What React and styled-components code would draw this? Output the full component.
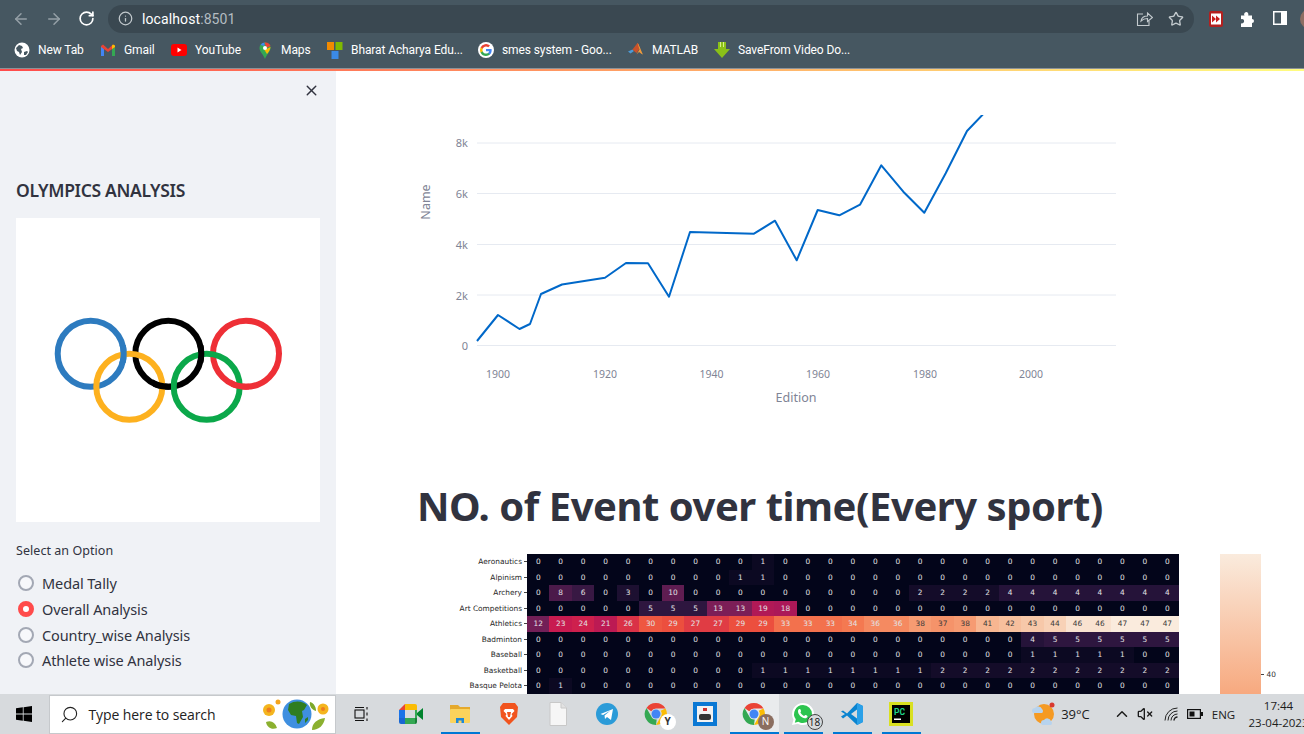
import React from 'react';
import styled, { createGlobalStyle } from 'styled-components';
import { ArrowLeft, ArrowRight, RotateCw, Info, Star, X, Search, VolumeX, ChevronUp } from 'lucide-react';

const GlobalStyle = createGlobalStyle`
  html, body { margin: 0; padding: 0; background: #fff; }
  * { box-sizing: border-box; }
  body { font-family: "Noto Sans", "Liberation Sans", sans-serif; color: #31333f; }
`;

const Page = styled.div`
  width: 1304px;
  height: 734px;
  display: flex;
  flex-direction: column;
  overflow: hidden;
`;

/* browser chrome */
const Toolbar = styled.div`
  height: 36px;
  flex: none;
  background: #465761;
  display: flex;
  align-items: center;
  padding-top: 1px;
`;
const NavButton = styled.div`
  width: 32.5px;
  flex: none;
  display: flex;
  justify-content: center;
  color: ${p => (p.$on ? '#fff' : '#95a0a7')};
`;
const NavGroup = styled.div`
  display: flex;
  padding-left: 5px;
  width: 108px;
  flex: none;
`;
const AddressBar = styled.div`
  width: 1086px;
  height: 28px;
  flex: none;
  border-radius: 14px;
  background: #3a4851;
  display: flex;
  align-items: center;
  padding: 0 2px 0 10px;
  color: #c3cace;
`;
const Url = styled.div`
  margin-left: 9px;
  font-family: Roboto, sans-serif;
  font-size: 14px;
  letter-spacing: 0.1px;
  color: #fff;
  flex: 1;
  span { color: #b4bcc1; }
`;
const AddressIcon = styled.div`
  width: 32px;
  display: flex;
  justify-content: center;
  color: #c3cace;
`;
const ExtGroup = styled.div`
  display: flex;
  margin-left: 6px;
  flex: none;
`;
const ExtButton = styled.div`
  width: 32px;
  display: flex;
  justify-content: center;
`;
const Avatar = styled.div`
  width: 20px;
  height: 20px;
  margin-left: 4px;
  flex: none;
  border-radius: 50%;
  background: #8d6e63;
`;
const Bookmarks = styled.div`
  height: 32px;
  flex: none;
  background: #465761;
  display: flex;
  align-items: center;
  padding: 0 0 4px 14px;
`;
const Bookmark = styled.div`
  width: ${p => p.$w}px;
  flex: none;
  display: flex;
  align-items: center;
  gap: 8px;
  font-family: Roboto, sans-serif;
  font-size: 12px;
  letter-spacing: -0.1px;
  color: #fff;
  white-space: nowrap;
`;
const Decoration = styled.div`
  height: 3px;
  flex: none;
  border-top: 1px solid #8b9298;
  background: linear-gradient(90deg, #ff4b4b, #fffd80);
`;

/* streamlit area */
const Content = styled.div`
  flex: 1;
  min-height: 0;
  display: flex;
  overflow: hidden;
`;
const Sidebar = styled.aside`
  width: 336px;
  flex: none;
  background: #f0f2f6;
  padding: 0 16px;
`;
const CloseRow = styled.div`
  height: 38px;
  display: flex;
  align-items: center;
  justify-content: flex-end;
  color: #31333f;
`;
const SideTitle = styled.h2`
  margin: 69px 0 0;
  font-size: 17.5px;
  line-height: 24px;
  font-weight: 600;
  letter-spacing: -0.35px;
  white-space: nowrap;
`;
const LogoCard = styled.div`
  width: 304px;
  height: 304px;
  margin-top: 16px;
  background: #fff;
`;
const OptionLabel = styled.div`
  margin-top: 19px;
  font-size: 12.5px;
  line-height: 20px;
  letter-spacing: 0.05px;
`;
const RadioList = styled.div`
  margin-top: 9.7px;
  display: flex;
  flex-direction: column;
`;
const RadioRow = styled.div`
  height: 25.6px;
  display: flex;
  align-items: center;
  gap: 8px;
  padding-left: 2px;
  font-size: 14.5px;
  letter-spacing: -0.1px;
  white-space: nowrap;
`;
const RadioDot = styled.span`
  width: 16px;
  height: 16px;
  flex: none;
  border-radius: 50%;
  border: ${p => (p.$on ? '5px solid #ff4b4b' : '2px solid #a3a8b4')};
  background: ${p => (p.$on ? '#fff' : '#f7f8fb')};
`;
const Main = styled.main`
  flex: 1;
  min-width: 0;
  padding: 44px 0 0 81px;
`;
const ChartSvg = styled.svg`
  display: block;
  font-family: "Noto Sans", sans-serif;
`;
const Heading = styled.h1`
  margin: 68px 0 0;
  font-size: 40px;
  line-height: 48px;
  font-weight: 700;
  letter-spacing: -0.47px;
  white-space: nowrap;
`;

/* heatmap */
const HeatRow = styled.div`
  margin-top: 24px;
  display: flex;
  align-items: flex-start;
`;
const YLabels = styled.div`
  width: 110px;
  flex: none;
`;
const YLabel = styled.div`
  height: 15.5px;
  display: flex;
  align-items: center;
  justify-content: flex-end;
  font-family: "DejaVu Sans", sans-serif;
  font-size: 7.4px;
  color: #262626;
  white-space: nowrap;
  &::after {
    content: '';
    width: 3px;
    height: 1px;
    margin-left: 2px;
    background: #444;
  }
`;
const HeatGrid = styled.div`
  display: grid;
  grid-template-columns: repeat(29, 22.48px);
  grid-auto-rows: 15.5px;
  flex: none;
`;
const HeatCell = styled.div`
  display: flex;
  align-items: center;
  justify-content: center;
  font-family: "DejaVu Sans", sans-serif;
  font-size: 7.4px;
  background: ${p => p.$bg};
  color: ${p => (p.$dark ? '#3a3a3a' : '#e2e2e4')};
`;
const ColorBar = styled.div`
  position: relative;
  width: 41px;
  height: 140px;
  margin-left: 41px;
  flex: none;
  background: linear-gradient(180deg, #faebdd, #f7a97f);
`;
const BarTick = styled.div`
  position: absolute;
  left: 41px;
  top: 116px;
  display: flex;
  align-items: center;
  gap: 3px;
  font-family: "DejaVu Sans", sans-serif;
  font-size: 7.4px;
  color: #333;
  &::before {
    content: '';
    width: 3px;
    height: 1px;
    background: #444;
  }
`;

/* windows taskbar */
const Taskbar = styled.div`
  height: 40px;
  flex: none;
  background: #d7dadd;
  display: flex;
  align-items: center;
  overflow: hidden;
`;
const StartButton = styled.div`
  width: 48.5px;
  flex: none;
  display: flex;
  justify-content: center;
`;
const SearchBox = styled.div`
  width: 287px;
  height: 39px;
  margin-top: 1px;
  flex: none;
  background: #fff;
  border: 1px solid #c6c9cc;
  display: flex;
  align-items: center;
  padding-left: 10px;
  color: #222;
  font-family: "Open Sans", sans-serif;
  font-size: 14px;
`;
const SearchText = styled.span`
  margin-left: 10px;
  flex: 1;
  letter-spacing: -0.1px;
  white-space: nowrap;
`;
const Slots = styled.div`
  display: flex;
  margin-left: 2px;
  flex: none;
  height: 40px;
`;
const Slot = styled.div`
  position: relative;
  width: 49px;
  height: 40px;
  flex: none;
  display: flex;
  align-items: center;
  justify-content: center;
  background: ${p => (p.$active ? '#e9ebed' : 'transparent')};
  &::after {
    content: '';
    display: ${p => (p.$open ? 'block' : 'none')};
    position: absolute;
    bottom: 0;
    left: ${p => (p.$active ? 0 : 5)}px;
    right: ${p => (p.$active ? 0 : 5)}px;
    height: 2px;
    background: #0078d4;
  }
`;
const Badge = styled.span`
  position: absolute;
  right: 5px;
  bottom: 4px;
  min-width: 16px;
  height: 16px;
  border-radius: 50%;
  background: ${p => p.$bg};
  border: ${p => (p.$ring ? '1px solid #444' : 'none')};
  color: ${p => p.$fg};
  font-family: "Open Sans", sans-serif;
  font-size: 10px;
  line-height: 15px;
  text-align: center;
`;
const Tray = styled.div`
  display: flex;
  align-items: center;
  margin-left: 104px;
  flex: none;
  color: #1c1c1c;
  font-family: "Open Sans", sans-serif;
`;
const TrayItem = styled.div`
  width: ${p => p.$w}px;
  flex: none;
  display: flex;
  align-items: center;
  justify-content: center;
  margin-left: ${p => p.$gap || 0}px;
  font-size: ${p => p.$size || 12}px;
`;
const Clock = styled.div`
  width: 70px;
  flex: none;
  margin-left: 2px;
  display: flex;
  flex-direction: column;
  align-items: center;
  font-size: 11.5px;
  line-height: 17.5px;
  white-space: nowrap;
`;

/* drawings */
const Ring = ({ cx, cy, color, clip }) => (
  <circle cx={cx} cy={cy} r="33" fill="none" stroke={color} strokeWidth="6" clipPath={clip} />
);

const OlympicRings = () => (
  <svg width="304" height="304" viewBox="16 218 304 304">
    <defs>
      <clipPath id="over-a"><rect x="114" y="345" width="18" height="18" /></clipPath>
      <clipPath id="over-b"><rect x="153" y="377" width="18" height="18" /></clipPath>
      <clipPath id="over-c"><rect x="192" y="345" width="18" height="18" /></clipPath>
      <clipPath id="over-d"><rect x="231" y="377" width="18" height="18" /></clipPath>
    </defs>
    <Ring cx="90.7" cy="353.7" color="#2d7bbf" />
    <Ring cx="168.3" cy="353.7" color="#000" />
    <Ring cx="246" cy="353.7" color="#ee2f36" />
    <Ring cx="129.3" cy="386.7" color="#fdb11f" />
    <Ring cx="206.7" cy="386.7" color="#0ba84a" />
    <Ring cx="90.7" cy="353.7" color="#2d7bbf" clip="url(#over-a)" />
    <Ring cx="168.3" cy="353.7" color="#000" clip="url(#over-b)" />
    <Ring cx="168.3" cy="353.7" color="#000" clip="url(#over-c)" />
    <Ring cx="246" cy="353.7" color="#ee2f36" clip="url(#over-d)" />
  </svg>
);

const linePoints = [
  [477, 341], [498, 315], [519.5, 329], [530, 324], [541, 294], [562, 284.5], [605, 277.7],
  [626, 263], [648, 263.3], [669, 296.7], [690, 232], [754, 233.7], [775, 220.7], [796.7, 260.3],
  [817.7, 210], [839.3, 215.3], [860, 204.7], [881.3, 165.3], [903.3, 191.7], [924.3, 212.7],
  [945.7, 173.3], [967, 131], [990, 107],
];

const AreaChart = () => (
  <ChartSvg width="700" height="299" viewBox="417 115 700 299">
    {[143, 193.5, 244.5, 295, 345.5].map(y => (
      <line key={y} x1="477" x2="1116" y1={y} y2={y} stroke="#e6eaf1" strokeWidth="1" />
    ))}
    {[['8k', 147], ['6k', 198], ['4k', 249], ['2k', 299.5], ['0', 350]].map(([t, y]) => (
      <text key={t} x="468" y={y} textAnchor="end" fontSize="11" fill="#808495">{t}</text>
    ))}
    {[[1900, 498], [1920, 605], [1940, 711.5], [1960, 818], [1980, 925], [2000, 1031]].map(([t, x]) => (
      <text key={t} x={x} y="378" textAnchor="middle" fontSize="10.5" fill="#808495">{t}</text>
    ))}
    <text x="796" y="402" textAnchor="middle" fontSize="12.5" fill="#808495">Edition</text>
    <text transform="translate(430 202) rotate(-90)" textAnchor="middle" fontSize="12.5" fill="#808495">Name</text>
    <polyline
      points={linePoints.map(p => p.join(',')).join(' ')}
      fill="none"
      stroke="#0068c9"
      strokeWidth="2"
      strokeLinejoin="round"
    />
  </ChartSvg>
);

const GlobeIcon = () => (
  <svg width="16" height="16" viewBox="0 0 16 16">
    <circle cx="8" cy="8" r="7.5" fill="#fff" />
    <path d="M2 6l3-3 3 1 1 2-2 1 1 3-2 3-1-3-2-1zM10 10l3-1 1 1-2 3-2 0z" fill="#465761" />
  </svg>
);
const GmailIcon = () => (
  <svg width="16" height="14" viewBox="0 0 16 14">
    <path d="M1 3v10h3V6z" fill="#4285f4" />
    <path d="M15 3v10h-3V6z" fill="#34a853" />
    <path d="M1 3l2-1.5L8 6l5-4.5L15 3v1L8 9 1 4z" fill="#ea4335" />
    <path d="M12 6l3-2V2.500L13 1.500 12 2.500z" fill="#fbbc04" />
  </svg>
);
const YouTubeIcon = () => (
  <svg width="16" height="12" viewBox="0 0 16 12">
    <rect width="16" height="12" rx="3" fill="#f00" />
    <path d="M6.500 3.500v5l4-2.500z" fill="#fff" />
  </svg>
);
const MapsIcon = () => (
  <svg width="16" height="17" viewBox="0 0 13 17">
    <path d="M6.500 17C5 12.500 1 10 1 6a5.500 5.500 0 0 1 11 0c0 4-4 6.500-5.500 11z" fill="#34a853" />
    <path d="M2 3a5.500 5.500 0 0 1 4-2.500V4z" fill="#4285f4" />
    <path d="M6 .5A5.500 5.500 0 0 1 12 4L8 6z" fill="#ea4335" />
    <path d="M12 5c0 2.500-2 5-3.500 7L6 8z" fill="#fbbc04" />
    <circle cx="6.500" cy="6" r="2" fill="#fff" />
  </svg>
);
const SquaresIcon = () => (
  <svg width="16" height="17" viewBox="0 0 16 17">
    <rect x="0" y="0" width="7" height="8" fill="#f28a00" />
    <rect x="8.500" y="0" width="7" height="8" fill="#7fba00" />
    <rect x="4.500" y="9" width="7" height="8" fill="#3b8ae6" />
  </svg>
);
const GoogleIcon = () => (
  <svg width="16" height="16" viewBox="0 0 24 24">
    <circle cx="12" cy="12" r="12" fill="#fff" />
    <path d="M20.500 12.200c0-.6-.1-1.200-.2-1.700H12v3.300h4.800a4 4 0 0 1-1.800 2.700v2.200h2.900c1.600-1.500 2.600-3.800 2.600-6.500z" fill="#4285f4" />
    <path d="M12 21c2.400 0 4.400-.8 5.900-2.200L15 16.500c-.8.500-1.800.9-3 .9-2.300 0-4.300-1.600-5-3.700H4v2.300A9 9 0 0 0 12 21z" fill="#34a853" />
    <path d="M7 13.700a5.400 5.400 0 0 1 0-3.400V8H4a9 9 0 0 0 0 8z" fill="#fbbc04" />
    <path d="M12 6.600c1.300 0 2.500.5 3.400 1.300L18 5.400A9 9 0 0 0 4 8l3 2.300c.7-2.100 2.700-3.700 5-3.700z" fill="#ea4335" />
  </svg>
);
const MatlabIcon = () => (
  <svg width="16" height="16" viewBox="0 0 16 16">
    <path d="M0 9.500l4.500-2L6 9 2.500 11.500z" fill="#4c9ad6" />
    <path d="M4.500 7.500L9.500 1c1 0 2 4 2 6l-3 4L6 9z" fill="#c8512a" />
    <path d="M9.500 1c1.500 1 3.500 8 5.500 11.500-2-.5-3-2-4-2.500l-2.500 2.500 3-5z" fill="#ef9b3c" />
  </svg>
);
const SaveFromIcon = () => (
  <svg width="16" height="16" viewBox="0 0 16 16">
    <path d="M4 0h8v7h4l-8 9-8-9h4z" fill="#8ac018" />
    <path d="M6.500 0v5M9.500 0v5" stroke="#d8f08a" strokeWidth="1" />
  </svg>
);
const ShareIcon = () => (
  <svg width="17" height="16" viewBox="0 0 17 16" fill="none" stroke="#c3cace" strokeWidth="1.100">
    <path d="M7 3H1.500v11.500H13V10" />
    <path d="M5 10c.5-3 3-5 6.500-5V2l5 4.500-5 4V7.500C9 7.500 6.500 8.500 5 10z" />
  </svg>
);
const ExtRedIcon = () => (
  <svg width="14" height="16" viewBox="0 0 14 16">
    <rect width="14" height="16" rx="2" fill="#b3201f" />
    <rect x="2" y="2.500" width="10" height="11" fill="#fff" />
    <path d="M3 4.500l4 3.500-4 3.500zM7 4.500L11 8l-4 3.500z" fill="#c8201f" />
  </svg>
);
const PuzzleIcon = () => (
  <svg width="16" height="16" viewBox="0 0 16 16">
    <path d="M1 4.500h3.500a2 2 0 0 1 3.500-2.500q.7 1 .2 2.500H12v3.500a2 2 0 1 1 0 4V16H1v-3.800a2.200 2.200 0 1 0 0-4z" fill="#fff" />
  </svg>
);
const PanelIcon = () => (
  <svg width="14" height="14" viewBox="0 0 14 14">
    <rect x="0.750" y="0.750" width="12.500" height="12.500" fill="#465761" stroke="#fff" strokeWidth="1.500" />
    <rect x="8" y="0" width="6" height="14" fill="#fff" />
  </svg>
);
const WindowsIcon = () => (
  <svg width="16" height="16" viewBox="0 0 16 16" fill="#000">
    <path d="M0 2.300l6.800-1v6.300H0zM7.600 1.200L16 0v7.600H7.600zM0 8.400h6.800v6.300l-6.800-1zM7.600 8.400H16V16l-8.400-1.200z" />
  </svg>
);
const EarthBadge = () => (
  <svg width="74" height="36" viewBox="0 0 74 36">
    <circle cx="8" cy="13" r="6" fill="#f4b51e" />
    <circle cx="8" cy="13" r="2.500" fill="#ee7d1f" />
    <circle cx="17" cy="5" r="2.500" fill="#f4a51e" />
    <path d="M5 25c5-2 9 0 11 6-5 2-10 0-11-6z" fill="#8bb02f" />
    <circle cx="36" cy="17" r="14.500" fill="#3f8fe0" />
    <path d="M28 7c6-4 14-3 18 1l-3 5-2 1 1 6-4 7-2-1-1-7-5-1-3-5zM44 22l3-2 0 3-3 3z" fill="#2f7d21" />
    <path d="M49 5c4 1 6 5 6 9-4-1-7-5-6-9z" fill="#7da82a" />
    <circle cx="62" cy="12" r="5.500" fill="#f4b51e" />
    <circle cx="62" cy="12" r="2" fill="#ee7d1f" />
    <path d="M51 33c0-7 5-11 13-12-1 7-6 12-13 12z" fill="#8bb02f" />
  </svg>
);
const TaskViewIcon = () => (
  <svg width="16" height="16" viewBox="0 0 16 16" fill="none" stroke="#111" strokeWidth="1.100">
    <rect x="1" y="4" width="9" height="8" />
    <path d="M1 1.500h9M1 14.500h9M13 1v2.500M13 6.500v3M13 12.500v2.500" />
  </svg>
);
const MeetIcon = () => (
  <svg width="24" height="22" viewBox="0 0 24 22">
    <path d="M6 1h10v6H6z" fill="#fbbc04" />
    <path d="M0 7l6-6v6z" fill="#ea4335" />
    <path d="M0 7h6v8H0z" fill="#1a73e8" />
    <path d="M0 15h6v6H2a2 2 0 0 1-2-2z" fill="#1967d2" />
    <path d="M6 15h10v6H6z" fill="#34a853" />
    <path d="M16 1h0a2 2 0 0 1 2 2v4h-2z" fill="#fbbc04" />
    <path d="M16 15h2v4a2 2 0 0 1-2 2z" fill="#188038" />
    <path d="M16 7h2v8h-2z" fill="#34a853" />
    <path d="M18 10l6-5v12l-6-5z" fill="#00832d" />
  </svg>
);
const FolderIcon = () => (
  <svg width="22" height="20" viewBox="0 0 22 20">
    <path d="M1 1h8l2 2h10v4H1z" fill="#e5a92c" />
    <rect x="1" y="5" width="20" height="14" rx="1" fill="#fbd35c" />
    <path d="M7 19v-5h8v5h-2.500v-2.500h-3V19z" fill="#1e88d8" />
  </svg>
);
const BraveIcon = () => (
  <svg width="20" height="24" viewBox="0 0 20 24">
    <path d="M4 1h12l3 4-1 10-8 8-8-8L1 5z" fill="#f1541e" />
    <path d="M6 7h8l1.500 2-3 3 1 2-3.500 4-3.500-4 1-2-3-3z" fill="#fff" />
    <path d="M8 10h4l-1 5h-2z" fill="#f1541e" />
  </svg>
);
const FileIcon = () => (
  <svg width="18" height="24" viewBox="0 0 18 24">
    <path d="M1 .5h11l5.500 5.500v17.500H1z" fill="#f6f6f6" stroke="#c8c8c8" />
    <path d="M12 .5V6h5.500" fill="#e2e2e2" stroke="#c8c8c8" />
  </svg>
);
const TelegramIcon = () => (
  <svg width="22" height="22" viewBox="0 0 22 22">
    <circle cx="11" cy="11" r="11" fill="#2b9bd8" />
    <path d="M4.500 11L17 6l-2 11-4-3-2 2-.5-3.500 6-5-7.500 4.500z" fill="#fff" />
  </svg>
);
const ChromeIcon = ({ size = 24 }) => (
  <svg width={size} height={size} viewBox="0 0 24 24">
    <path d="M12 1a11 11 0 0 1 9.500 5.500H12a5.500 5.500 0 0 0-4.800 2.800L2.500 6A11 11 0 0 1 12 1z" fill="#ea4335" />
    <path d="M21.500 6.500A11 11 0 0 1 12 23l4.800-8.200a5.500 5.500 0 0 0-.1-6z" fill="#fbbc04" />
    <path d="M12 23A11 11 0 0 1 2.500 6l4.700 8.200a5.500 5.500 0 0 0 5.500 3.200z" fill="#34a853" />
    <circle cx="12" cy="12" r="4.500" fill="#4285f4" />
  </svg>
);
const PhotoAppIcon = () => (
  <svg width="24" height="24" viewBox="0 0 24 24">
    <rect width="24" height="24" fill="#0a78d4" />
    <rect x="4" y="4" width="16" height="16" fill="#f2f2f2" />
    <rect x="6" y="12" width="12" height="6" rx="2" fill="#333" />
    <rect x="10" y="6" width="4" height="3" fill="#c33" />
  </svg>
);
const WhatsAppIcon = () => (
  <svg width="24" height="24" viewBox="0 0 24 24">
    <path d="M12 1a11 11 0 0 1 0 22c-2 0-3.700-.5-5.200-1.300L1 23l1.500-5.500A11 11 0 0 1 12 1z" fill="#fff" />
    <path d="M12 3a9 9 0 0 1 0 18c-1.800 0-3.300-.5-4.700-1.300l-3.500 1 1-3.400A9 9 0 0 1 12 3z" fill="#2cc44f" />
    <path d="M8.500 7c1 0 1 .5 1.500 2 .2.800-.5 1-.6 1.500.8 1.600 2 2.700 3.600 3.400.6 0 .8-1 1.500-.9 1.500.5 2 .8 2 1.300 0 1.500-1.500 2-2.500 2-3.500-.2-7-3.800-7-7C7 8 7.500 7 8.500 7z" fill="#fff" />
  </svg>
);
const VSCodeIcon = () => (
  <svg width="24" height="24" viewBox="0 0 24 24">
    <path d="M17 1l6 3v16l-6 3-10-9.500-4 3L1 14.500 5 12 1 9.500 3 8.500l4 3z" fill="#0a84d0" />
    <path d="M17 1l6 3v16l-6 3V16l-5-4 5-4z" fill="#2aa0e8" />
    <path d="M17 7.500L11 12l6 4.500z" fill="#d7dadd" />
  </svg>
);
const PyCharmIcon = () => (
  <svg width="24" height="24" viewBox="0 0 24 24">
    <rect width="24" height="24" fill="#d9e021" />
    <rect x="3" y="3" width="18" height="18" fill="#000" />
    <text x="5" y="13" fontFamily="Roboto, sans-serif" fontWeight="700" fontSize="8.500" fill="#21d789">PC</text>
    <rect x="5" y="16.500" width="7" height="1.500" fill="#fff" />
  </svg>
);
const WeatherIcon = () => (
  <svg width="26" height="26" viewBox="0 0 26 26">
    <circle cx="14" cy="13" r="10" fill="#f59a23" />
    <circle cx="22" cy="4" r="2.500" fill="#d8382e" />
    <path d="M2 10a3 3 0 0 1 3-3 4 4 0 0 1 7 1 2.500 2.500 0 0 1 0 4H3.500A2 2 0 0 1 2 10z" fill="#b7d3ee" />
    <path d="M11 22a3 3 0 0 1 3-3 4 4 0 0 1 7 1 2.500 2.500 0 0 1 0 4h-8.500a2 2 0 0 1-1.500-2z" fill="#b7d3ee" />
  </svg>
);
const WifiIcon = () => (
  <svg width="16" height="16" viewBox="0 0 16 16" fill="none" stroke="#222" strokeWidth="1">
    <path d="M2 14.500A12.500 12.500 0 0 1 14.500 2" />
    <path d="M5 14.500A9.500 9.500 0 0 1 14.500 5" />
    <path d="M8 14.500A6.500 6.500 0 0 1 14.500 8" />
    <path d="M11 14.500A3.500 3.500 0 0 1 14.500 11" strokeWidth="1.500" />
  </svg>
);
const BatteryIcon = () => (
  <svg width="16" height="10" viewBox="0 0 16 10">
    <rect x="0.600" y="0.600" width="12.800" height="8.800" fill="none" stroke="#111" strokeWidth="1.200" />
    <rect x="2.500" y="2.500" width="5" height="5" fill="#111" />
    <rect x="14" y="3" width="2" height="4" fill="#111" />
  </svg>
);

/* rocket colormap, the seaborn default */
const stops = [
  [0, [3, 5, 26]], [0.1, [43, 22, 62]], [0.25, [112, 31, 87]], [0.38, [170, 24, 88]], [0.5, [203, 27, 79]],
  [0.62, [237, 80, 62]], [0.72, [244, 120, 80]], [0.82, [246, 160, 118]], [0.9, [247, 194, 160]], [1, [250, 235, 221]],
];
const rocket = v => {
  const t = v / 47;
  for (let i = 1; i < stops.length; i++) {
    if (t <= stops[i][0]) {
      const [a, ca] = stops[i - 1];
      const [b, cb] = stops[i];
      const k = (t - a) / (b - a);
      return `rgb(${ca.map((c, j) => Math.round(c + (cb[j] - c) * k)).join(',')})`;
    }
  }
  return 'rgb(250,235,221)';
};

const zeros = n => Array(n).fill(0);
const heatRows = [
  ['Aeronautics', [...zeros(10), 1, ...zeros(18)]],
  ['Alpinism', [...zeros(9), 1, 1, ...zeros(18)]],
  ['Archery', [0, 8, 6, 0, 3, 0, 10, ...zeros(10), 2, 2, 2, 2, 4, 4, 4, 4, 4, 4, 4, 4]],
  ['Art Competitions', [0, 0, 0, 0, 0, 5, 5, 5, 13, 13, 19, 18, ...zeros(17)]],
  ['Athletics', [12, 23, 24, 21, 26, 30, 29, 27, 27, 29, 29, 33, 33, 33, 34, 36, 36, 38, 37, 38, 41, 42, 43, 44, 46, 46, 47, 47, 47]],
  ['Badminton', [...zeros(22), 4, 5, 5, 5, 5, 5, 5]],
  ['Baseball', [...zeros(22), 1, 1, 1, 1, 1, 0, 0]],
  ['Basketball', [...zeros(10), 1, 1, 1, 1, 1, 1, 1, 1, ...Array(11).fill(2)]],
  ['Basque Pelota', [0, 1, ...zeros(27)]],
];

const bookmarks = [
  [GlobeIcon, 'New Tab', 86],
  [GmailIcon, 'Gmail', 71],
  [YouTubeIcon, 'YouTube', 86],
  [MapsIcon, 'Maps', 70],
  [SquaresIcon, 'Bharat Acharya Edu...', 151],
  [GoogleIcon, 'smes system - Goo...', 150],
  [MatlabIcon, 'MATLAB', 86],
  [SaveFromIcon, 'SaveFrom Video Do...', 150],
];
const options = ['Medal Tally', 'Overall Analysis', 'Country_wise Analysis', 'Athlete wise Analysis'];

export default function App() {
  return (
    <Page>
      <GlobalStyle />
      <Toolbar>
        <NavGroup>
          <NavButton><ArrowLeft size={18} /></NavButton>
          <NavButton><ArrowRight size={18} /></NavButton>
          <NavButton $on><RotateCw size={17} strokeWidth={2.4} /></NavButton>
        </NavGroup>
        <AddressBar>
          <Info size={15} />
          <Url>localhost<span>:8501</span></Url>
          <AddressIcon><ShareIcon /></AddressIcon>
          <AddressIcon><Star size={16} /></AddressIcon>
        </AddressBar>
        <ExtGroup>
          <ExtButton><ExtRedIcon /></ExtButton>
          <ExtButton><PuzzleIcon /></ExtButton>
          <ExtButton><PanelIcon /></ExtButton>
        </ExtGroup>
        <Avatar />
      </Toolbar>
      <Bookmarks>
        {bookmarks.map(([Icon, label, w]) => (
          <Bookmark key={label} $w={w}><Icon />{label}</Bookmark>
        ))}
      </Bookmarks>
      <Decoration />
      <Content>
        <Sidebar>
          <CloseRow><X size={17} /></CloseRow>
          <SideTitle>OLYMPICS ANALYSIS</SideTitle>
          <LogoCard><OlympicRings /></LogoCard>
          <OptionLabel>Select an Option</OptionLabel>
          <RadioList>
            {options.map((o, i) => (
              <RadioRow key={o}><RadioDot $on={i === 1} />{o}</RadioRow>
            ))}
          </RadioList>
        </Sidebar>
        <Main>
          <AreaChart />
          <Heading>NO. of Event over time(Every sport)</Heading>
          <HeatRow>
            <YLabels>
              {heatRows.map(([name]) => <YLabel key={name}>{name}</YLabel>)}
            </YLabels>
            <HeatGrid>
              {heatRows.map(([name, vals]) =>
                vals.map((v, i) => (
                  <HeatCell key={name + i} $bg={rocket(v)} $dark={v >= 37}>{v}</HeatCell>
                ))
              )}
            </HeatGrid>
            <ColorBar><BarTick>40</BarTick></ColorBar>
          </HeatRow>
        </Main>
      </Content>
      <Taskbar>
        <StartButton><WindowsIcon /></StartButton>
        <SearchBox>
          <Search size={19} strokeWidth={1.4} style={{ transform: 'scaleX(-1)' }} />
          <SearchText>Type here to search</SearchText>
          <EarthBadge />
        </SearchBox>
        <Slots>
          <Slot><TaskViewIcon /></Slot>
          <Slot><MeetIcon /></Slot>
          <Slot $open><FolderIcon /></Slot>
          <Slot><BraveIcon /></Slot>
          <Slot><FileIcon /></Slot>
          <Slot><TelegramIcon /></Slot>
          <Slot><ChromeIcon /><Badge $bg="#fff" $fg="#333" style={{ fontWeight: 700 }}>Y</Badge></Slot>
          <Slot><PhotoAppIcon /></Slot>
          <Slot $open $active><ChromeIcon /><Badge $bg="#8b6e60" $fg="#fff">N</Badge></Slot>
          <Slot $open><WhatsAppIcon /><Badge $bg="#d7dadd" $fg="#111" $ring>18</Badge></Slot>
          <Slot $open><VSCodeIcon /></Slot>
          <Slot $open><PyCharmIcon /></Slot>
        </Slots>
        <Tray>
          <TrayItem $w={26}><WeatherIcon /></TrayItem>
          <TrayItem $w={40} $size={13}>39°C</TrayItem>
          <TrayItem $w={20} $gap={16}><ChevronUp size={18} /></TrayItem>
          <TrayItem $w={26}><VolumeX size={16} /></TrayItem>
          <TrayItem $w={26}><WifiIcon /></TrayItem>
          <TrayItem $w={22}><BatteryIcon /></TrayItem>
          <TrayItem $w={36} $size={11.5}>ENG</TrayItem>
          <Clock><span>17:44</span><span>23-04-2023</span></Clock>
        </Tray>
      </Taskbar>
    </Page>
  );
}
